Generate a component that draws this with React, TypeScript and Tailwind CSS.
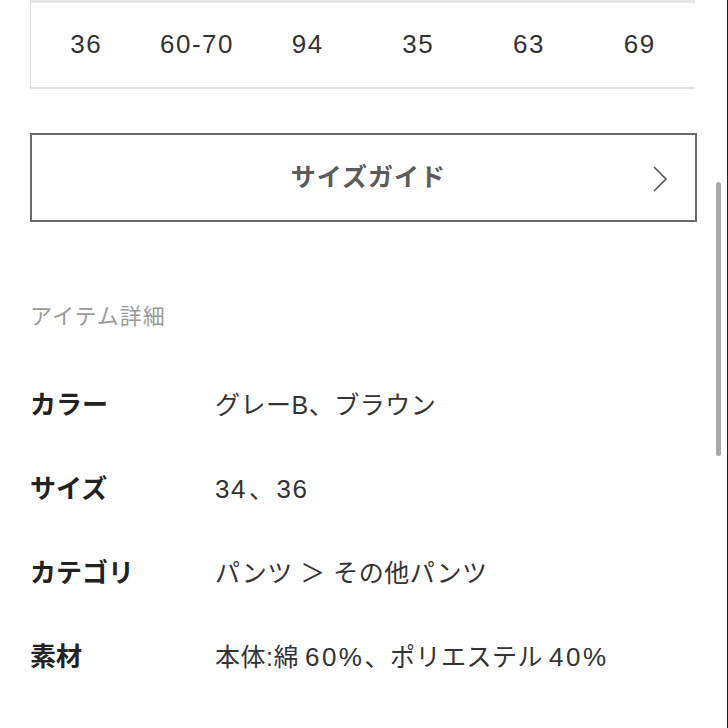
import React from 'react';

const sizes = ['36', '60-70', '94', '35', '63', '69'];

const details = [
  { label: 'カラー', value: 'グレーB、ブラウン' },
  { label: 'サイズ', value: '34、36' },
  { label: 'カテゴリ', value: 'パンツ ＞ その他パンツ' },
  { label: '素材', value: '本体:綿60%、ポリエステル40%' },
];

// digits in the reference font run wider, with a little space beside kana
function Value({ text }: { text: string }) {
  const parts = text.split(/([0-9][0-9%]*)/);
  return (
    <>
      {parts.map((p, i) => {
        if (!/^[0-9]/.test(p)) return <span key={i}>{p}</span>;
        if (i === 1 && parts[0] === '') {
          return (
            <span key={i} className="mr-[2px] text-[26px] tracking-[1.5px]">
              {p}
            </span>
          );
        }
        return (
          <span
            key={i}
            className={p.includes('%') ? 'ml-[6px] text-[26px] tracking-[2.5px]' : 'ml-[2px] text-[26px] tracking-[1.5px]'}
          >
            {p}
          </span>
        );
      })}
    </>
  );
}

export default function App() {
  return (
    <div
      className="relative w-[728px] h-[728px] overflow-hidden bg-white border-r border-[#222]"
      style={{ fontFamily: '"Liberation Sans", "Noto Sans CJK JP", sans-serif' }}
    >
      <div className="px-[30px]">
        {/* Size table row */}
        <div className="mr-[2px] h-[89px] border-t-[3px] border-l border-b-2 border-t-[#e6e6e6] border-l-[#e0e0e0] border-b-[#e0e0e0] grid grid-cols-6 items-center">
          {sizes.map((s, i) => (
            <div key={i} className="text-center text-[26px] text-[#333] tracking-[1.5px] pb-[1px]">
              {s}
            </div>
          ))}
        </div>

        {/* Size guide button */}
        <div className="relative mt-[44px] h-[89px] border-2 border-[#6a6a6a] flex items-center justify-center">
          <span className="pl-[10px] text-[25px] font-bold text-[#5c5c5c] tracking-[1px]">サイズガイド</span>
          <svg className="absolute right-[27px] top-[30px]" width="16" height="28" viewBox="0 0 16 28" fill="none">
            <path d="M2 2 L14 14 L2 26" stroke="#555" strokeWidth="1.6" strokeLinejoin="miter" />
          </svg>
        </div>

        {/* Item details */}
        <div className="mt-[84px] text-[22px] text-[#9a9a9a] leading-none tracking-[1px]">アイテム詳細</div>

        <div className="mt-[63px] flex flex-col gap-[56px]">
          {details.map((d) => (
            <div key={d.label} className="flex items-center h-[28px]">
              <div className="w-[185px] shrink-0 text-[26px] font-bold text-[#222] leading-none">{d.label}</div>
              <div className="text-[25px] text-[#333] leading-none tracking-[0.5px] whitespace-nowrap">
                <Value text={d.value} />
              </div>
            </div>
          ))}
        </div>
      </div>

      {/* Scrollbar */}
      <div className="absolute right-[6px] top-[182px] w-[5px] h-[274px] rounded-full bg-[#a8a8a8]" />
    </div>
  );
}
